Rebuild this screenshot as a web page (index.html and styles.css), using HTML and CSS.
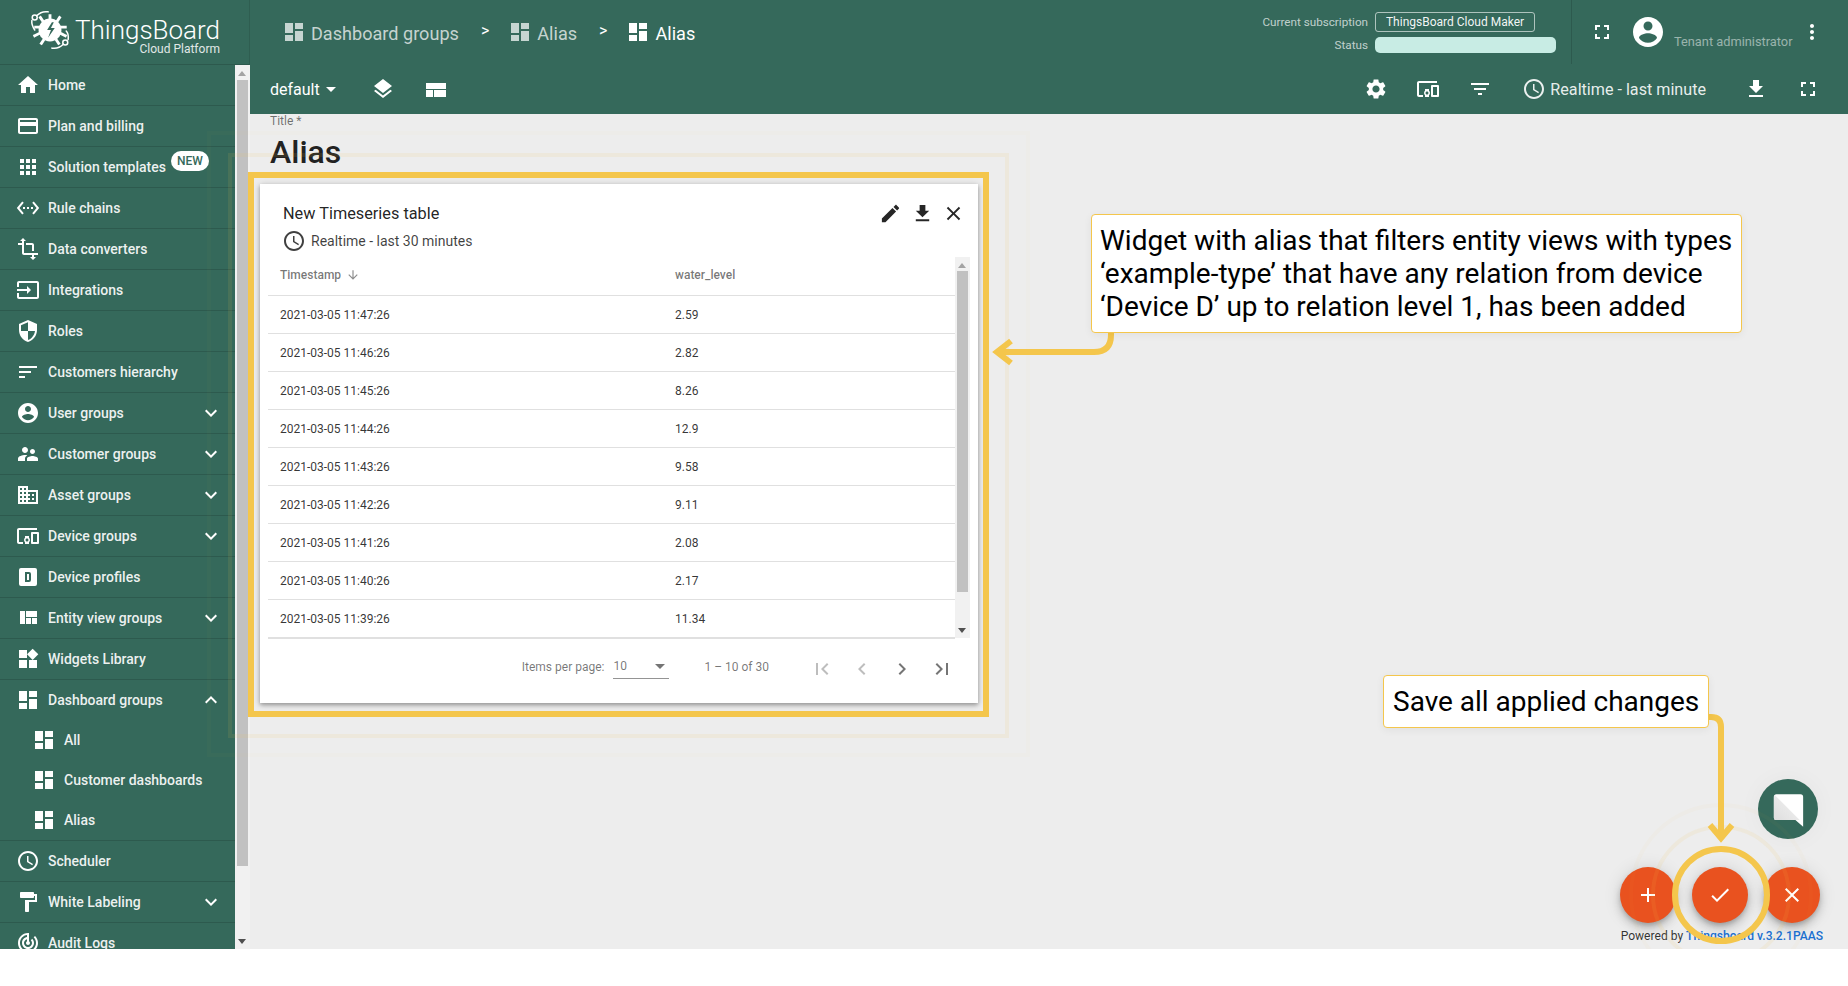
FILE: index.html
```html
<!DOCTYPE html>
<html lang="en">
<head>
<meta charset="utf-8">
<title>Alias</title>
<link rel="stylesheet" href="styles.css">
</head>
<body>
<svg class="sprite" aria-hidden="true">
  <symbol id="i-home" viewBox="0 0 24 24"><path d="M10 20v-6h4v6h5v-8h3L12 3 2 12h3v8z"/></symbol>
  <symbol id="i-card" viewBox="0 0 24 24"><path d="M20 4H4c-1.11 0-1.99.89-1.99 2L2 18c0 1.11.89 2 2 2h16c1.11 0 2-.89 2-2V6c0-1.11-.89-2-2-2zm0 14H4v-6h16v6zm0-10H4V6h16v2z"/></symbol>
  <symbol id="i-apps" viewBox="0 0 24 24"><path d="M4 8h4V4H4v4zm6 12h4v-4h-4v4zm-6 0h4v-4H4v4zm0-6h4v-4H4v4zm6 0h4v-4h-4v4zm6-10v4h4V4h-4zm-6 4h4V4h-4v4zm6 6h4v-4h-4v4zm0 6h4v-4h-4v4z"/></symbol>
  <symbol id="i-ethernet" viewBox="0 0 24 24"><path d="M7.77 6.76L6.23 5.48.82 12l5.41 6.52 1.54-1.28L3.42 12l4.35-5.24zM7 13h2v-2H7v2zm10-2h-2v2h2v-2zm-6 2h2v-2h-2v2zm6.77-7.52l-1.54 1.28L20.58 12l-4.35 5.24 1.54 1.28L23.18 12l-5.41-6.52z"/></symbol>
  <symbol id="i-transform" viewBox="0 0 24 24"><path d="M22 18v-2H8V4h2L7 1 4 4h2v2H2v2h4v8c0 1.1.9 2 2 2h8v2h-2l3 3 3-3h-2v-2h4zM10 8h6v6h2V8c0-1.1-.9-2-2-2h-6v2z"/></symbol>
  <symbol id="i-input" viewBox="0 0 24 24"><path d="M21 3.01H3c-1.1 0-2 .9-2 2V9h2V4.99h18v14.03H3V15H1v4.01c0 1.1.9 1.98 2 1.98h18c1.1 0 2-.88 2-1.98v-14c0-1.11-.9-2-2-2zM11 16l4-4-4-4v3H1v2h10v3z"/></symbol>
  <symbol id="i-security" viewBox="0 0 24 24"><path d="M12 1L3 5v6c0 5.55 3.84 10.74 9 12 5.16-1.26 9-6.45 9-12V5l-9-4zm0 10.99h7c-.53 4.12-3.28 7.79-7 8.94V12H5V6.3l7-3.11v8.8z"/></symbol>
  <symbol id="i-sort" viewBox="0 0 24 24"><path d="M3 18h6v-2H3v2zM3 6v2h18V6H3zm0 7h12v-2H3v2z"/></symbol>
  <symbol id="i-account" viewBox="0 0 24 24"><path d="M12 2C6.48 2 2 6.48 2 12s4.48 10 10 10 10-4.48 10-10S17.52 2 12 2zm0 3c1.66 0 3 1.34 3 3s-1.34 3-3 3-3-1.34-3-3 1.34-3 3-3zm0 14.2c-2.5 0-4.71-1.28-6-3.22.03-1.99 4-3.08 6-3.08 1.99 0 5.97 1.09 6 3.08-1.29 1.94-3.5 3.22-6 3.22z"/></symbol>
  <symbol id="i-supervisor" viewBox="0 0 24 24"><path d="M16.5 12c1.38 0 2.49-1.12 2.49-2.5S17.88 7 16.5 7C15.12 7 14 8.12 14 9.5s1.12 2.5 2.5 2.5zM9 11c1.66 0 2.99-1.34 2.99-3S10.66 5 9 5C7.34 5 6 6.34 6 8s1.34 3 3 3zm7.5 3c-1.83 0-5.5.92-5.5 2.75V19h11v-2.25c0-1.83-3.67-2.75-5.5-2.75zM9 13c-2.33 0-7 1.17-7 3.5V19h7v-2.25c0-.85.33-2.34 2.37-3.47C10.5 13.1 9.66 13 9 13z"/></symbol>
  <symbol id="i-domain" viewBox="0 0 24 24"><path d="M12 7V3H2v18h20V7H12zM6 19H4v-2h2v2zm0-4H4v-2h2v2zm0-4H4V9h2v2zm0-4H4V5h2v2zm4 12H8v-2h2v2zm0-4H8v-2h2v2zm0-4H8V9h2v2zm0-4H8V5h2v2zm10 12h-8v-2h2v-2h-2v-2h2v-2h-2V9h8v10zm-2-8h-2v2h2v-2zm0 4h-2v2h2v-2z"/></symbol>
  <symbol id="i-devices" viewBox="0 0 24 24"><path d="M3 6h18V4H3c-1.1 0-2 .9-2 2v12c0 1.1.9 2 2 2h4v-2H3V6zm10 6H9v1.78c-.61.55-1 1.33-1 2.22s.39 1.67 1 2.22V20h4v-1.78c.61-.55 1-1.34 1-2.22s-.39-1.67-1-2.22V12zm-2 5.5c-.83 0-1.5-.67-1.5-1.5s.67-1.5 1.5-1.5 1.5.67 1.5 1.5-.67 1.5-1.5 1.5zM22 8h-6c-.5 0-1 .5-1 1v10c0 .5.5 1 1 1h6c.5 0 1-.5 1-1V9c0-.5-.5-1-1-1zm-1 10h-4v-8h4v8z"/></symbol>
  <symbol id="i-dbox" viewBox="0 0 24 24"><path fill-rule="evenodd" d="M9 7v10h4a2 2 0 0 0 2-2V9a2 2 0 0 0-2-2H9zm2 2h2v6h-2V9zM5 3h14a2 2 0 0 1 2 2v14a2 2 0 0 1-2 2H5a2 2 0 0 1-2-2V5a2 2 0 0 1 2-2z"/></symbol>
  <symbol id="i-quilt" viewBox="0 0 24 24"><path d="M10 18h5v-6h-5v6zm-6 0h5V5H4v13zm12 0h5v-6h-5v6zM10 5v6h11V5H10z"/></symbol>
  <symbol id="i-widgets" viewBox="0 0 24 24"><path d="M13 13v8h8v-8h-8zM3 21h8v-8H3v8zM3 3v8h8V3H3zm13.66-1.31L11 7.34 16.66 13l5.66-5.66-5.66-5.65z"/></symbol>
  <symbol id="i-dashboard" viewBox="0 0 24 24"><path d="M3 13h8V3H3v10zm0 8h8v-6H3v6zm10 0h8V11h-8v10zm0-18v6h8V3h-8z"/></symbol>
  <symbol id="i-clock" viewBox="0 0 24 24"><path d="M11.99 2C6.47 2 2 6.48 2 12s4.47 10 9.99 10C17.52 22 22 17.52 22 12S17.52 2 11.99 2zM12 20c-4.42 0-8-3.58-8-8s3.58-8 8-8 8 3.58 8 8-3.58 8-8 8zm.5-13H11v6l5.25 3.15.75-1.23-4.5-2.67z"/></symbol>
  <symbol id="i-paint" viewBox="0 0 24 24"><path d="M18 4V3c0-.55-.45-1-1-1H5c-.55 0-1 .45-1 1v4c0 .55.45 1 1 1h12c.55 0 1-.45 1-1V6h1v4H9v11c0 .55.45 1 1 1h2c.55 0 1-.45 1-1v-9h8V4h-3z"/></symbol>
  <symbol id="i-track" viewBox="0 0 24 24"><path d="M19.07 4.93l-1.41 1.41C19.1 7.79 20 9.79 20 12c0 4.42-3.58 8-8 8s-8-3.58-8-8c0-4.08 3.05-7.44 7-7.93v2.02C8.16 6.57 6 9.03 6 12c0 3.31 2.69 6 6 6s6-2.69 6-6c0-1.66-.67-3.16-1.76-4.24l-1.41 1.41C15.55 9.9 16 10.9 16 12c0 2.21-1.79 4-4 4s-4-1.79-4-4c0-1.86 1.28-3.41 3-3.86v2.14c-.6.35-1 .98-1 1.72 0 1.1.9 2 2 2s2-.9 2-2c0-.74-.4-1.38-1-1.72V2h-1C6.48 2 2 6.48 2 12s4.48 10 10 10 10-4.48 10-10c0-2.76-1.12-5.26-2.93-7.07z"/></symbol>
  <symbol id="i-more" viewBox="0 0 24 24"><path d="M16.59 8.59L12 13.17 7.41 8.59 6 10l6 6 6-6z"/></symbol>
  <symbol id="i-less" viewBox="0 0 24 24"><path d="M12 8l-6 6 1.41 1.41L12 10.83l4.59 4.58L18 14z"/></symbol>
  <symbol id="i-full" viewBox="0 0 24 24"><path d="M7 14H5v5h5v-2H7v-3zm-2-4h2V7h3V5H5v5zm12 7h-3v2h5v-5h-2v3zM14 5v2h3v3h2V5h-5z"/></symbol>
  <symbol id="i-vert" viewBox="0 0 24 24"><path d="M12 8c1.1 0 2-.9 2-2s-.9-2-2-2-2 .9-2 2 .9 2 2 2zm0 2c-1.1 0-2 .9-2 2s.9 2 2 2 2-.9 2-2-.9-2-2-2zm0 6c-1.1 0-2 .9-2 2s.9 2 2 2 2-.9 2-2-.9-2-2-2z"/></symbol>
  <symbol id="i-layers" viewBox="0 0 24 24"><path d="M11.99 18.54l-7.37-5.73L3 14.07l9 7 9-7-1.63-1.27-7.38 5.74zM12 16l7.36-5.73L21 9l-9-7-9 7 1.63 1.27L12 16z"/></symbol>
  <symbol id="i-layout" viewBox="0 0 24 24"><path d="M2 5h20v6H2zM2 12h7v7H2zM10 12h12v7H10z"/></symbol>
  <symbol id="i-gear" viewBox="0 0 24 24"><path d="M19.14 12.94c.04-.3.06-.61.06-.94 0-.32-.02-.64-.07-.94l2.03-1.58c.18-.14.23-.41.12-.61l-1.92-3.32c-.12-.22-.37-.29-.59-.22l-2.39.96c-.5-.38-1.03-.7-1.62-.94l-.36-2.54c-.04-.24-.24-.41-.48-.41h-3.84c-.24 0-.43.17-.47.41l-.36 2.54c-.59.24-1.13.57-1.62.94l-2.39-.96c-.22-.08-.47 0-.59.22L2.74 8.87c-.12.21-.08.47.12.61l2.03 1.58c-.05.3-.09.63-.09.94s.02.64.07.94l-2.03 1.58c-.18.14-.23.41-.12.61l1.92 3.32c.12.22.37.29.59.22l2.39-.96c.5.38 1.03.7 1.62.94l.36 2.54c.05.24.24.41.48.41h3.84c.24 0 .44-.17.47-.41l.36-2.54c.59-.24 1.13-.56 1.62-.94l2.39.96c.22.08.47 0 .59-.22l1.92-3.32c.12-.22.07-.47-.12-.61l-2.01-1.58zM12 15.6c-1.98 0-3.6-1.62-3.6-3.6s1.62-3.6 3.6-3.6 3.6 1.62 3.6 3.6-1.62 3.6-3.6 3.6z"/></symbol>
  <symbol id="i-filter" viewBox="0 0 24 24"><path d="M10 18h4v-2h-4v2zM3 6v2h18V6H3zm3 7h12v-2H6v2z"/></symbol>
  <symbol id="i-download" viewBox="0 0 24 24"><path d="M19 9h-4V3H9v6H5l7 7 7-7zM5 18v2h14v-2H5z"/></symbol>
  <symbol id="i-edit" viewBox="0 0 24 24"><path d="M3 17.25V21h3.75L17.81 9.94l-3.75-3.75L3 17.25zM20.71 7.04c.39-.39.39-1.02 0-1.41l-2.34-2.34c-.39-.39-1.02-.39-1.41 0l-1.83 1.83 3.75 3.75 1.83-1.83z"/></symbol>
  <symbol id="i-close" viewBox="0 0 24 24"><path d="M19 6.41L17.59 5 12 10.59 6.41 5 5 6.41 10.59 12 5 17.59 6.41 19 12 13.41 17.59 19 19 17.59 13.41 12z"/></symbol>
  <symbol id="i-down" viewBox="0 0 24 24"><path d="M20 12l-1.41-1.41L13 16.17V4h-2v12.17l-5.58-5.59L4 12l8 8 8-8z"/></symbol>
  <symbol id="i-first" viewBox="0 0 24 24"><path d="M18.41 16.59L13.83 12l4.58-4.59L17 6l-6 6 6 6 1.41-1.41zM6 6h2v12H6V6z"/></symbol>
  <symbol id="i-last" viewBox="0 0 24 24"><path d="M5.59 7.41L10.17 12l-4.58 4.59L7 18l6-6-6-6-1.41 1.41zM16 6h2v12h-2V6z"/></symbol>
  <symbol id="i-prev" viewBox="0 0 24 24"><path d="M15.41 7.41L14 6l-6 6 6 6 1.41-1.41L10.83 12z"/></symbol>
  <symbol id="i-next" viewBox="0 0 24 24"><path d="M10 6L8.59 7.41 13.17 12l-4.58 4.59L10 18l6-6z"/></symbol>
  <symbol id="i-add" viewBox="0 0 24 24"><path d="M19 13h-6v6h-2v-6H5v-2h6V5h2v6h6v2z"/></symbol>
  <symbol id="i-done" viewBox="0 0 24 24"><path d="M9 16.17L4.83 12l-1.42 1.41L9 19 21 7l-1.41-1.41z"/></symbol>
</svg>

<div class="app">
  <aside class="side">
    <div class="brand">
      <svg class="logo" viewBox="0 0 44 44">
        <g fill="none" stroke="#fff" stroke-width="1.6" stroke-linecap="round">
          <path d="M20 3 C14 2 10 5 8 7"/>
          <circle cx="6" cy="9" r="2.6"/>
          <path d="M3 12 C2.5 16 4 19 6 22"/>
          <path d="M24 41 C30 42 34 39 36 37"/>
          <circle cx="38" cy="35" r="2.6"/>
          <path d="M41 32 C41.5 28 41 25 39 23"/>
        </g>
        <g stroke="#fff" stroke-width="3" stroke-linecap="square">
          <path d="M22 10V7M14 12l-2-3M30 12l2-3M11 19H7M33 19h5M10 26l-4 2M34 26l4 2M15 33l-2 3M29 33l2 3"/>
        </g>
        <circle cx="22" cy="22" r="12" fill="#fff"/>
        <path d="M24 14l-5 8h4l-3 8 7-10h-4l3-6z" fill="#35695b"/>
      </svg>
      <div class="brand-text">
        <span class="brand-name">ThingsBoard</span>
        <span class="brand-sub">Cloud Platform</span>
      </div>
    </div>
    <div class="side-body">
      <nav class="nav">
        <a class="row"><svg class="ic"><use href="#i-home"/></svg><span>Home</span></a>
        <a class="row"><svg class="ic"><use href="#i-card"/></svg><span>Plan and billing</span></a>
        <a class="row"><svg class="ic"><use href="#i-apps"/></svg><span>Solution templates</span><b class="new">NEW</b></a>
        <a class="row"><svg class="ic"><use href="#i-ethernet"/></svg><span>Rule chains</span></a>
        <a class="row"><svg class="ic"><use href="#i-transform"/></svg><span>Data converters</span></a>
        <a class="row"><svg class="ic"><use href="#i-input"/></svg><span>Integrations</span></a>
        <a class="row"><svg class="ic"><use href="#i-security"/></svg><span>Roles</span></a>
        <a class="row"><svg class="ic"><use href="#i-sort"/></svg><span>Customers hierarchy</span></a>
        <a class="row"><svg class="ic"><use href="#i-account"/></svg><span>User groups</span><svg class="ic chev"><use href="#i-more"/></svg></a>
        <a class="row"><svg class="ic"><use href="#i-supervisor"/></svg><span>Customer groups</span><svg class="ic chev"><use href="#i-more"/></svg></a>
        <a class="row"><svg class="ic"><use href="#i-domain"/></svg><span>Asset groups</span><svg class="ic chev"><use href="#i-more"/></svg></a>
        <a class="row"><svg class="ic"><use href="#i-devices"/></svg><span>Device groups</span><svg class="ic chev"><use href="#i-more"/></svg></a>
        <a class="row"><svg class="ic"><use href="#i-dbox"/></svg><span>Device profiles</span></a>
        <a class="row"><svg class="ic"><use href="#i-quilt"/></svg><span>Entity view groups</span><svg class="ic chev"><use href="#i-more"/></svg></a>
        <a class="row"><svg class="ic"><use href="#i-widgets"/></svg><span>Widgets Library</span></a>
        <a class="row open"><svg class="ic"><use href="#i-dashboard"/></svg><span>Dashboard groups</span><svg class="ic chev"><use href="#i-less"/></svg></a>
        <div class="subs">
          <a class="sub"><svg class="ic"><use href="#i-dashboard"/></svg><span>All</span></a>
          <a class="sub"><svg class="ic"><use href="#i-dashboard"/></svg><span>Customer dashboards</span></a>
          <a class="sub"><svg class="ic"><use href="#i-dashboard"/></svg><span>Alias</span></a>
        </div>
        <a class="row"><svg class="ic"><use href="#i-clock"/></svg><span>Scheduler</span></a>
        <a class="row"><svg class="ic"><use href="#i-paint"/></svg><span>White Labeling</span><svg class="ic chev"><use href="#i-more"/></svg></a>
        <a class="row"><svg class="ic"><use href="#i-track"/></svg><span>Audit Logs</span></a>
      </nav>
      <div class="vbar side-bar"><i class="up"></i><i class="thumb"></i><i class="dn"></i></div>
    </div>
  </aside>

  <main class="main">
    <header class="top">
      <div class="top-row">
        <div class="crumbs">
          <svg class="ic dim"><use href="#i-dashboard"/></svg><span class="crumb dim">Dashboard groups</span>
          <span class="gt">&gt;</span>
          <svg class="ic dim"><use href="#i-dashboard"/></svg><span class="crumb dim">Alias</span>
          <span class="gt">&gt;</span>
          <svg class="ic"><use href="#i-dashboard"/></svg><span class="crumb">Alias</span>
        </div>
        <div class="subscr">
          <span class="sub-label">Current subscription</span>
          <span class="plan">ThingsBoard Cloud Maker</span>
          <span class="sub-label">Status</span>
          <span class="status"></span>
        </div>
        <div class="user">
          <svg class="ic"><use href="#i-full"/></svg>
          <svg class="avatar"><use href="#i-account"/></svg>
          <span class="role">Tenant administrator</span>
          <svg class="ic"><use href="#i-vert"/></svg>
        </div>
      </div>
      <div class="tool-row">
        <div class="tool-left">
          <span class="state">default</span><i class="caret"></i>
          <svg class="ic layers"><use href="#i-layers"/></svg>
          <svg class="ic layout"><use href="#i-layout"/></svg>
        </div>
        <div class="tool-right">
          <svg class="ic"><use href="#i-gear"/></svg>
          <svg class="ic"><use href="#i-devices"/></svg>
          <svg class="ic"><use href="#i-filter"/></svg>
          <div class="time"><svg class="ic"><use href="#i-clock"/></svg><span>Realtime - last minute</span></div>
          <svg class="ic"><use href="#i-download"/></svg>
          <svg class="ic"><use href="#i-full"/></svg>
        </div>
      </div>
    </header>

    <section class="content">
      <label class="title-label">Title *</label>
      <h1 class="title">Alias</h1>
      <article class="card">
        <div class="card-head">
          <div>
            <div class="card-title">New Timeseries table</div>
            <div class="card-time"><svg class="ic"><use href="#i-clock"/></svg><span>Realtime - last 30 minutes</span></div>
          </div>
          <div class="card-actions">
            <svg class="ic"><use href="#i-edit"/></svg>
            <svg class="ic"><use href="#i-download"/></svg>
            <svg class="ic"><use href="#i-close"/></svg>
          </div>
        </div>
        <div class="table-wrap">
          <div class="table">
            <div class="tr th"><span>Timestamp <svg class="sort"><use href="#i-down"/></svg></span><span>water_level</span></div>
            <div class="tr"><span>2021-03-05 11:47:26</span><span>2.59</span></div>
            <div class="tr"><span>2021-03-05 11:46:26</span><span>2.82</span></div>
            <div class="tr"><span>2021-03-05 11:45:26</span><span>8.26</span></div>
            <div class="tr"><span>2021-03-05 11:44:26</span><span>12.9</span></div>
            <div class="tr"><span>2021-03-05 11:43:26</span><span>9.58</span></div>
            <div class="tr"><span>2021-03-05 11:42:26</span><span>9.11</span></div>
            <div class="tr"><span>2021-03-05 11:41:26</span><span>2.08</span></div>
            <div class="tr"><span>2021-03-05 11:40:26</span><span>2.17</span></div>
            <div class="tr"><span>2021-03-05 11:39:26</span><span>11.34</span></div>
          </div>
          <div class="vbar table-bar"><i class="up"></i><i class="thumb"></i><i class="dn"></i></div>
        </div>
        <div class="pager">
          <span>Items per page:</span>
          <div class="select"><span>10</span><i class="caret grey"></i></div>
          <span class="range">1 – 10 of 30</span>
          <div class="pages">
            <svg class="ic off"><use href="#i-first"/></svg>
            <svg class="ic off"><use href="#i-prev"/></svg>
            <svg class="ic"><use href="#i-next"/></svg>
            <svg class="ic"><use href="#i-last"/></svg>
          </div>
        </div>
      </article>
    </section>
  </main>

  <div class="chat">
    <svg viewBox="0 0 36 40" class="chat-ic">
      <defs><linearGradient id="fold" x1="0" y1="1" x2="1" y2="0"><stop offset="0" stop-color="#dedede"/><stop offset="1" stop-color="#f4f4f4"/></linearGradient></defs>
      <path fill="#fff" d="M4 1h28a3 3 0 0 1 3 3v35l-9-8H4a3 3 0 0 1-3-3V4a3 3 0 0 1 3-3z"/>
      <path fill="url(#fold)" d="M2 2l29 29H4a3 3 0 0 1-3-3V4z"/>
    </svg>
  </div>
  <div class="fabs">
    <button class="fab"><svg class="ic"><use href="#i-add"/></svg></button>
    <button class="fab"><svg class="ic"><use href="#i-done"/></svg></button>
    <button class="fab"><svg class="ic"><use href="#i-close"/></svg></button>
  </div>
  <div class="powered">Powered by <a>Thingsboard v.3.2.1PAAS</a></div>

  <svg class="overlay" viewBox="0 0 1848 986">
    <g fill="none" stroke="#f4c64c">
      <rect x="209" y="133" width="819" height="622" stroke-width="4" opacity=".025"/>
      <rect x="230" y="155" width="777" height="581" stroke-width="4" opacity=".1"/>
      <rect x="251" y="175" width="735" height="539" stroke-width="6"/>
      <circle cx="1721" cy="895" r="90" stroke-width="4" opacity=".03"/>
      <circle cx="1721" cy="895" r="68" stroke-width="4" opacity=".1"/>
      <circle cx="1721" cy="895" r="46" stroke-width="6"/>
      <path d="M1111 333v2q0 17-17 17H998" stroke-width="6"/>
      <path d="M1011 341l-14 11 14 11" stroke-width="6"/>
      <path d="M1709 717h2q10 0 10 10V838" stroke-width="6"/>
      <path d="M1710 825l11 13 11-13" stroke-width="6"/>
    </g>
  </svg>
  <div class="note note-a">Widget with alias that filters entity views with types<br>‘example-type’ that have any relation from device<br>‘Device D’ up to relation level 1, has been added</div>
  <div class="note note-b">Save all applied changes</div>
</div>
</body>
</html>
```

FILE: styles.css
```css
* { box-sizing: border-box; }
html, body { margin: 0; padding: 0; background: #fff; }
body { font-family: Roboto, "Liberation Sans", sans-serif; overflow: hidden; }
.sprite { position: absolute; width: 0; height: 0; }
.ic { width: 24px; height: 24px; fill: currentColor; flex: none; display: block; }
.app { position: relative; display: flex; width: 1848px; height: 949px; background: #ededed; }

/* sidebar */
.side { width: 250px; flex: none; display: flex; flex-direction: column; background: #35695b; color: #fff; }
.brand { height: 65px; flex: none; display: flex; align-items: flex-start; padding: 9px 0 0 29px; border-bottom: 1px solid rgba(0,0,0,.14); border-right: 1px solid rgba(0,0,0,.1); }
.logo { width: 42px; height: 42px; flex: none; }
.brand-text { display: flex; flex-direction: column; align-items: flex-end; margin-left: 4px; }
.brand-name { font-size: 26px; line-height: 30px; margin-top: 6px; font-weight: 300; }
.brand-sub { font-size: 12px; line-height: 14px; margin-top: -3px; opacity: .85; }
.side-body { flex: 1; display: flex; min-height: 0; }
.nav { width: 235px; flex: none; overflow: hidden; }
.row { position: relative; display: flex; align-items: center; height: 41px; padding: 0 12px 0 16px; gap: 8px; font-size: 14px; font-weight: 500; border-bottom: 1px solid rgba(0,0,0,.14); color: rgba(255,255,255,.92); }
.row .ic { color: #fff; }
.row.open { height: 40px; border-bottom: 0; }
.chev { margin-left: auto; }
.new { position: absolute; left: 171px; top: 4px; width: 38px; height: 20px; border-radius: 10px; background: #fff; color: #35695b; font-size: 12px; font-weight: 500; line-height: 20px; text-align: center; }
.subs { border-bottom: 1px solid rgba(0,0,0,.14); }
.sub { display: flex; align-items: center; height: 40px; padding-left: 32px; gap: 8px; font-size: 14px; font-weight: 500; color: rgba(255,255,255,.92); }
.sub .ic { color: #fff; }

/* scrollbars */
.vbar { position: relative; flex: none; width: 15px; background: #f1f1f1; }
.vbar .thumb { position: absolute; left: 2px; right: 2px; background: #c1c1c1; }
.vbar .up, .vbar .dn { position: absolute; left: 3px; width: 0; height: 0; border-left: 4.5px solid transparent; border-right: 4.5px solid transparent; }
.vbar .up { top: 6px; border-bottom: 5px solid #a3a3a3; }
.vbar .dn { bottom: 5px; border-top: 5px solid #505050; }
.side-bar .thumb { top: 15px; bottom: 83px; }
.table-bar { height: 381px; }
.table-bar .thumb { top: 14px; bottom: 46px; }

/* toolbar */
.main { flex: 1; min-width: 0; display: flex; flex-direction: column; }
.top { height: 114px; flex: none; background: #35695b; color: #fff; }
.top-row { height: 64px; display: flex; align-items: stretch; }
.crumbs { display: flex; align-items: center; padding-left: 32px; font-size: 18.1px; }
.crumb { margin: 2px 0 0 5px; }
.dim { color: rgba(255,255,255,.72); }
.gt { font-size: 16px; margin: -4px 19px 0 22px; }
.subscr { margin-left: auto; display: grid; grid-template-columns: auto 181px; column-gap: 7px; row-gap: 5px; align-items: center; align-content: start; padding-top: 12px; font-size: 12px; }
.sub-label { text-align: right; font-size: 11.7px; color: rgba(255,255,255,.7); }
.plan { width: 160px; height: 20px; line-height: 18px; text-align: center; border: 1px solid rgba(255,255,255,.6); border-radius: 3px; color: rgba(255,255,255,.95); }
.status { height: 16px; border-radius: 5px; background: #c8ece4; }
.user { width: 277px; margin-left: 15px; display: flex; align-items: center; padding: 0 25px 0 18px; border-left: 1px solid rgba(0,0,0,.14); }
.avatar { width: 36px; height: 36px; fill: #fff; margin-left: 16px; flex: none; }
.role { font-size: 12.8px; color: rgba(255,255,255,.5); margin: 18px 8px 0 8px; white-space: nowrap; }
.tool-row { height: 50px; display: flex; align-items: center; justify-content: space-between; }
.tool-left { display: flex; align-items: center; padding-left: 20px; }
.state { font-size: 16px; }
.caret { width: 0; height: 0; border-left: 5px solid transparent; border-right: 5px solid transparent; border-top: 5px solid #fff; margin-left: 6px; }
.layers { margin-left: 35px; }
.layout { margin-left: 29px; margin-top: 2px; }
.tool-right { display: flex; align-items: center; gap: 28px; padding-right: 28px; }
.time { display: flex; align-items: center; gap: 4px; font-size: 16.15px; margin: 0 10px 0 2px; color: rgba(255,255,255,.9); }

/* dashboard */
.content { flex: 1; padding-left: 10px; }
.title-label { display: block; margin-left: 10px; font-size: 12px; line-height: 14px; color: rgba(0,0,0,.54); }
.title { margin: 5px 0 13px 10px; font-size: 32px; font-weight: 500; line-height: 38px; color: #222; }
.card { width: 718px; height: 519px; background: #fff; box-shadow: 0 2px 4px rgba(0,0,0,.3), 0 1px 8px rgba(0,0,0,.15); display: flex; flex-direction: column; }
.card-head { height: 73px; flex: none; display: flex; justify-content: space-between; padding: 19px 13px 0 23px; }
.card-title { font-size: 16.3px; line-height: 22px; color: rgba(0,0,0,.87); }
.card-time { display: flex; align-items: center; gap: 5px; margin-top: 4px; margin-left: -1px; font-size: 14px; line-height: 24px; color: rgba(0,0,0,.75); }
.card-actions { display: flex; gap: 8.5px; margin-top: -1px; color: rgba(0,0,0,.85); }
.card-actions .ic { width: 23px; height: 23px; }
.table-wrap { display: flex; height: 382px; margin: 0 8px 0 8px; flex: none; }
.table { flex: 1; min-width: 0; height: 382px; overflow: hidden; border-bottom: 2px solid #e0e0e0; }
.tr { display: grid; grid-template-columns: 395px 1fr; align-items: center; height: 38px; padding-left: 12px; border-bottom: 1px solid #e0e0e0; font-size: 12px; color: rgba(0,0,0,.8); }
.th { height: 39px; color: rgba(0,0,0,.54); font-weight: 500; padding-bottom: 3px; }
.th span { display: flex; align-items: center; gap: 3px; }
.sort { width: 14px; height: 14px; fill: rgba(0,0,0,.45); margin-left: 2px; }
.pager { flex: 1; display: flex; align-items: center; justify-content: flex-end; padding: 0 16px 9px 0; font-size: 12px; color: rgba(0,0,0,.54); }
.select { display: flex; align-items: center; justify-content: space-between; width: 56px; height: 24px; margin-left: 9px; padding-right: 4px; border-bottom: 1px solid rgba(0,0,0,.42); }
.caret.grey { border-top-color: rgba(0,0,0,.54); margin: 0; }
.range { margin-left: 35px; }
.pages { display: flex; margin-left: 33px; padding-top: 5px; }
.pages .ic { margin: 0 8px; color: rgba(0,0,0,.54); }
.pages .off { color: rgba(0,0,0,.26); }

/* floating items */
.chat { position: absolute; left: 1758px; top: 779px; width: 60px; height: 60px; border-radius: 50%; background: #35695b; display: flex; align-items: center; justify-content: center; box-shadow: 0 0 24px rgba(0,0,0,.04); }
.chat-ic { width: 31px; height: 35px; margin-top: 2px; }
.fabs { position: absolute; left: 1620px; top: 867px; display: flex; gap: 16px; }
.fab { width: 56px; height: 56px; padding: 0; border: 0; border-radius: 50%; background: #e9521f; color: #fff; display: flex; align-items: center; justify-content: center; box-shadow: 0 3px 5px -1px rgba(0,0,0,.2), 0 6px 10px rgba(0,0,0,.14), 0 1px 18px rgba(0,0,0,.12); }
.powered { position: absolute; right: 25px; top: 929px; font-size: 12.07px; line-height: 14px; color: rgba(0,0,0,.8); white-space: nowrap; }
.powered a { color: #1a6fd0; font-weight: 500; }
.overlay { position: absolute; left: 0; top: 0; width: 1848px; height: 986px; pointer-events: none; overflow: visible; }
.note { position: absolute; background: #fff; border: 1px solid #f4c64c; border-radius: 4px; color: #000; font-size: 28px; line-height: 33px; white-space: nowrap; box-shadow: 0 2px 8px rgba(0,0,0,.06); }
.note-a { left: 1091px; top: 214px; width: 651px; height: 119px; padding: 9px 8px; }
.note-b { left: 1383px; top: 675px; width: 326px; height: 53px; padding: 9px; }
```
